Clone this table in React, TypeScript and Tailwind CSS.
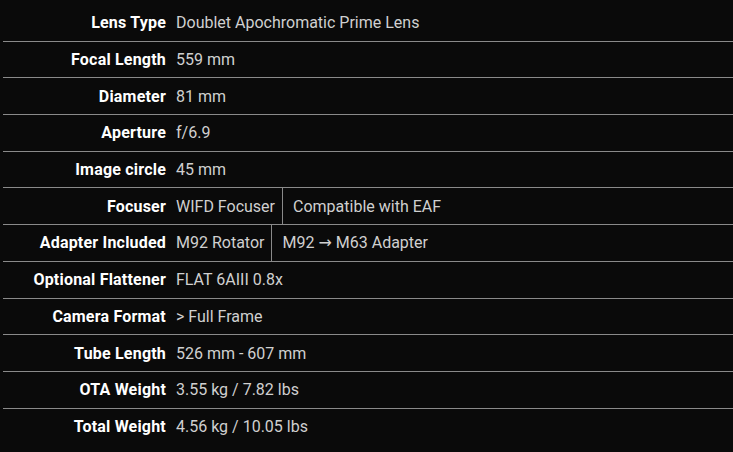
const specs: { label: string; values: string[] }[] = [
  { label: "Lens Type", values: ["Doublet Apochromatic Prime Lens"] },
  { label: "Focal Length", values: ["559 mm"] },
  { label: "Diameter", values: ["81 mm"] },
  { label: "Aperture", values: ["f/6.9"] },
  { label: "Image circle", values: ["45 mm"] },
  { label: "Focuser", values: ["WIFD Focuser", "Compatible with EAF"] },
  { label: "Adapter Included", values: ["M92 Rotator", "M92 → M63 Adapter"] },
  { label: "Optional Flattener", values: ["FLAT 6AIII 0.8x"] },
  { label: "Camera Format", values: ["> Full Frame"] },
  { label: "Tube Length", values: ["526 mm - 607 mm"] },
  { label: "OTA Weight", values: ["3.55 kg / 7.82 lbs"] },
  { label: "Total Weight", values: ["4.56 kg / 10.05 lbs"] },
];

// the arrow in the reference is wider than Roboto's
const renderValue = (v: string) => {
  if (!v.includes("→")) return <span>{v}</span>;
  const [a, b] = v.split("→");
  return (
    <span className="whitespace-pre">
      {a}
      <span className="font-['DejaVu_Sans'] text-[16px]">→</span>
      {b}
    </span>
  );
};

const App = () => {
  return (
    <div
      className="w-[733px] h-[452px] bg-[#0a0a0a] pt-[4px] pl-[3px] overflow-hidden"
      style={{ fontFamily: "Roboto, 'Liberation Sans', sans-serif" }}
    >
      {specs.map((row, i) => (
        <div
          key={row.label}
          className={`flex items-stretch h-[36.7px] text-[16px] ${
            i > 0 ? "border-t border-[#8a8a8a]" : ""
          }`}
        >
          <div className="w-[163px] shrink-0 flex items-center justify-end pt-px font-bold text-white whitespace-nowrap tracking-[0.2px]">
            {row.label}
          </div>
          {row.values.map((v, j) => (
            <div
              key={v}
              className={`flex items-center pt-px pl-[10px] pr-[7px] text-[#d0d0d0] whitespace-nowrap ${
                j > 0 ? "border-l border-[#8a8a8a]" : ""
              }`}
            >
              {renderValue(v)}
            </div>
          ))}
        </div>
      ))}
    </div>
  );
};

export default App;
